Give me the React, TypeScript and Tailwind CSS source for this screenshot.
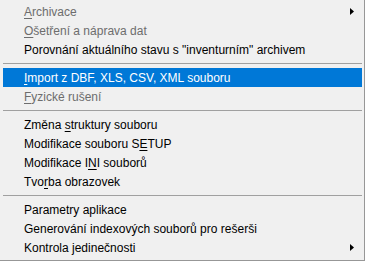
import React from "react";

type Item =
  | { sep: true }
  | {
      sep?: false;
      pre?: string;
      u?: string;
      post: string;
      disabled?: boolean;
      active?: boolean;
      arrow?: boolean;
    };

const items: Item[] = [
  { u: "A", post: "rchivace", disabled: true, arrow: true },
  { u: "O", post: "šetření a náprava dat", disabled: true },
  { post: "Porovnání aktuálního stavu s \"inventurním\" archivem" },
  { sep: true },
  { u: "I", post: "mport z DBF, XLS, CSV, XML souboru", active: true },
  { u: "F", post: "yzické rušení", disabled: true },
  { sep: true },
  { pre: "Změna ", u: "s", post: "truktury souboru" },
  { pre: "Modifikace souboru S", u: "E", post: "TUP" },
  { pre: "Modifikace I", u: "N", post: "I souborů" },
  { pre: "Tvo", u: "r", post: "ba obrazovek" },
  { sep: true },
  { post: "Parametry aplikace" },
  { post: "Generování indexových souborů pro rešerši" },
  { post: "Kontrola jedinečnosti", arrow: true },
];

function Arrow({ color }: { color: string }) {
  return (
    <svg width="4" height="7" viewBox="0 0 4 7" className="block">
      <path d="M0 0 L4 3.5 L0 7 Z" fill={color} />
    </svg>
  );
}

export default function App() {
  return (
    <div
      className="w-[365px] h-[261px] bg-[#f0f0f0] border-r border-b border-[#979797] pl-[3px] pr-[2px] pt-[2px] text-[12px] leading-[19px]"
      style={{ fontFamily: '"Liberation Sans", Arial, sans-serif' }}
    >
      {items.map((it, i) =>
        it.sep ? (
          <div key={i} className="h-[9px] flex items-center">
            <div className="h-px w-full bg-[#a0a0a0]" />
          </div>
        ) : (
          <div
            key={i}
            className={
              "h-[19px] flex items-center justify-between pl-[21px] pr-[8px] whitespace-nowrap " +
              (it.active
                ? "bg-[#0078d7] text-white"
                : it.disabled
                ? "text-[#6d6d6d]"
                : "text-black")
            }
          >
            <span className="pt-[1px]">
              {it.pre}
              {it.u && <span className="underline underline-offset-[2px]">{it.u}</span>}
              {it.post}
            </span>
            {it.arrow && <Arrow color="#000" />}
          </div>
        )
      )}
    </div>
  );
}
